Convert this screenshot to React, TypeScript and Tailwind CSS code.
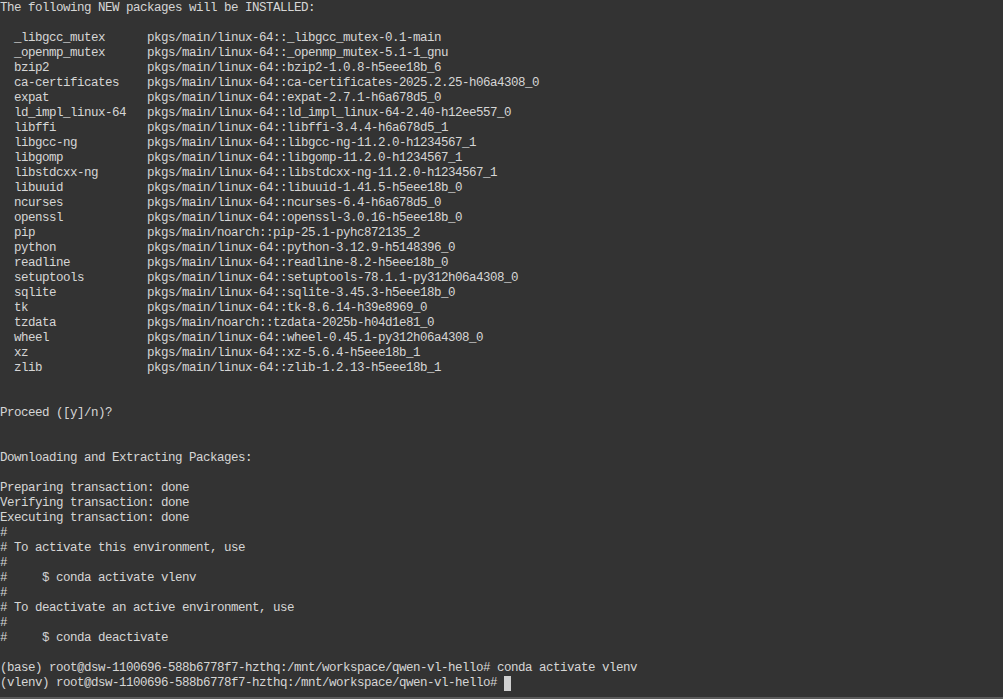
const packages: [string, string][] = [
  ['_libgcc_mutex', 'pkgs/main/linux-64::_libgcc_mutex-0.1-main'],
  ['_openmp_mutex', 'pkgs/main/linux-64::_openmp_mutex-5.1-1_gnu'],
  ['bzip2', 'pkgs/main/linux-64::bzip2-1.0.8-h5eee18b_6'],
  ['ca-certificates', 'pkgs/main/linux-64::ca-certificates-2025.2.25-h06a4308_0'],
  ['expat', 'pkgs/main/linux-64::expat-2.7.1-h6a678d5_0'],
  ['ld_impl_linux-64', 'pkgs/main/linux-64::ld_impl_linux-64-2.40-h12ee557_0'],
  ['libffi', 'pkgs/main/linux-64::libffi-3.4.4-h6a678d5_1'],
  ['libgcc-ng', 'pkgs/main/linux-64::libgcc-ng-11.2.0-h1234567_1'],
  ['libgomp', 'pkgs/main/linux-64::libgomp-11.2.0-h1234567_1'],
  ['libstdcxx-ng', 'pkgs/main/linux-64::libstdcxx-ng-11.2.0-h1234567_1'],
  ['libuuid', 'pkgs/main/linux-64::libuuid-1.41.5-h5eee18b_0'],
  ['ncurses', 'pkgs/main/linux-64::ncurses-6.4-h6a678d5_0'],
  ['openssl', 'pkgs/main/linux-64::openssl-3.0.16-h5eee18b_0'],
  ['pip', 'pkgs/main/noarch::pip-25.1-pyhc872135_2'],
  ['python', 'pkgs/main/linux-64::python-3.12.9-h5148396_0'],
  ['readline', 'pkgs/main/linux-64::readline-8.2-h5eee18b_0'],
  ['setuptools', 'pkgs/main/linux-64::setuptools-78.1.1-py312h06a4308_0'],
  ['sqlite', 'pkgs/main/linux-64::sqlite-3.45.3-h5eee18b_0'],
  ['tk', 'pkgs/main/linux-64::tk-8.6.14-h39e8969_0'],
  ['tzdata', 'pkgs/main/noarch::tzdata-2025b-h04d1e81_0'],
  ['wheel', 'pkgs/main/linux-64::wheel-0.45.1-py312h06a4308_0'],
  ['xz', 'pkgs/main/linux-64::xz-5.6.4-h5eee18b_1'],
  ['zlib', 'pkgs/main/linux-64::zlib-1.2.13-h5eee18b_1'],
];

const prompt = 'root@dsw-1100696-588b6778f7-hzthq:/mnt/workspace/qwen-vl-hello#';

const lines: string[] = [
  'The following NEW packages will be INSTALLED:',
  '',
  ...packages.map(([name, spec]) => '  ' + name.padEnd(19) + spec),
  '',
  '',
  'Proceed ([y]/n)?',
  '',
  '',
  'Downloading and Extracting Packages:',
  '',
  'Preparing transaction: done',
  'Verifying transaction: done',
  'Executing transaction: done',
  '#',
  '# To activate this environment, use',
  '#',
  '#     $ conda activate vlenv',
  '#',
  '# To deactivate an active environment, use',
  '#',
  '#     $ conda deactivate',
  '',
  `(base) ${prompt} conda activate vlenv`,
];

function Line({ children }: { children?: React.ReactNode }) {
  return <div className="h-[15px] leading-[15px] whitespace-pre">{children}</div>;
}

export default function App() {
  return (
    <div className="h-[699px] w-full flex flex-col bg-[#333333] text-[#d6d6d6] overflow-hidden">
      <div
        className="flex-1 flex flex-col pt-[1px] text-[12.5px] tracking-[-0.5px]"
        style={{ fontFamily: '"Liberation Mono", "DejaVu Sans Mono", monospace' }}
      >
        {lines.map((l, i) => (
          <Line key={i}>{l}</Line>
        ))}
        <Line>
          {`(vlenv) ${prompt} `}
          <span className="inline-block align-top w-[7px] h-[15px] bg-[#d0d0d0]" />
        </Line>
      </div>
      <div className="h-[2px] bg-[#5a5a5a]" />
    </div>
  );
}
